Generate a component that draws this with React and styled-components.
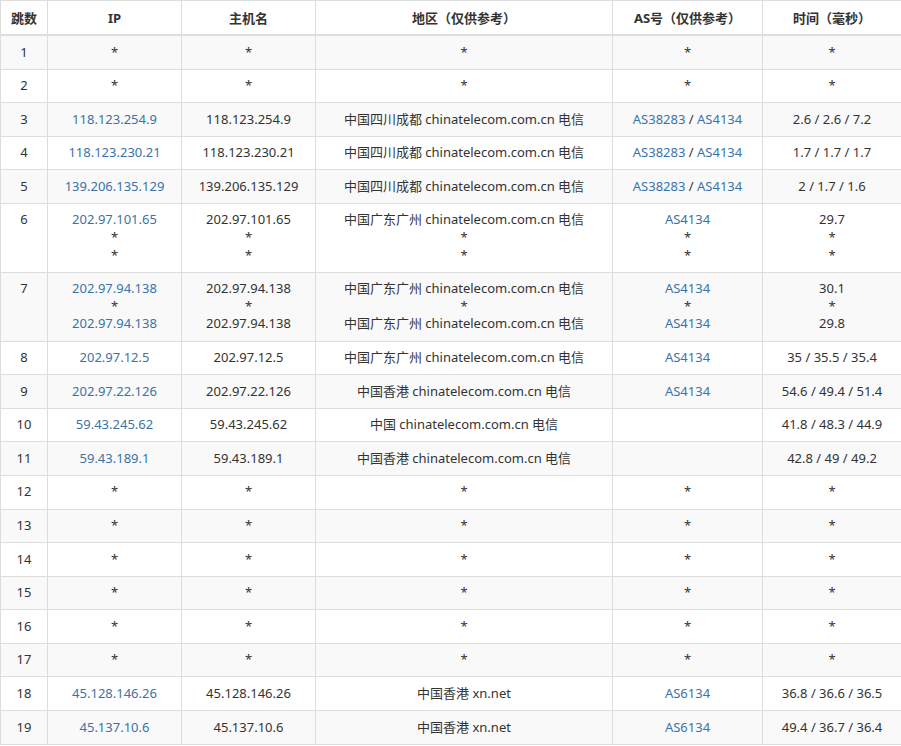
import React from "react";
import styled, { createGlobalStyle } from "styled-components";

const G = createGlobalStyle`
  body { margin: 0; background: #fff; font-family: "Noto Sans", "Noto Sans CJK SC", sans-serif; font-size: 13px; color: #333; }
`;
const Table = styled.table`
  width: 901px; border-collapse: collapse; table-layout: fixed;
`;
const Col = styled.col`
  width: ${p => p.$w}px;
`;
const Th = styled.th`
  border: 1px solid #ddd; border-bottom-width: 2px; padding: 7.5px 4px; font-weight: bold; line-height: 18px; text-align: center;
`;
const Tr = styled.tr`
  background: ${p => (p.$odd ? "#f9f9f9" : "#fff")};
`;
const Td = styled.td`
  border: 1px solid #ddd; padding: 7.5px 4px; line-height: 17.6px; text-align: center; vertical-align: top; white-space: nowrap;
`;
const Link = styled.span` color: #3b73a8; `;
const Line = styled.div``;

const S = "*";
const T = "chinatelecom.com.cn 电信";
const rows = [
  [[S],[S],[S],[S],[S]],
  [[S],[S],[S],[S],[S]],
  [["118.123.254.9"],["118.123.254.9"],["中国四川成都 "+T],["AS"],["2.6 / 2.6 / 7.2"]],
  [["118.123.230.21"],["118.123.230.21"],["中国四川成都 "+T],["AS"],["1.7 / 1.7 / 1.7"]],
  [["139.206.135.129"],["139.206.135.129"],["中国四川成都 "+T],["AS"],["2 / 1.7 / 1.6"]],
  [["202.97.101.65",S,S],["202.97.101.65",S,S],["中国广东广州 "+T,S,S],["AS4134",S,S],["29.7",S,S]],
  [["202.97.94.138",S,"202.97.94.138"],["202.97.94.138",S,"202.97.94.138"],["中国广东广州 "+T,S,"中国广东广州 "+T],["AS4134",S,"AS4134"],["30.1",S,"29.8"]],
  [["202.97.12.5"],["202.97.12.5"],["中国广东广州 "+T],["AS4134"],["35 / 35.5 / 35.4"]],
  [["202.97.22.126"],["202.97.22.126"],["中国香港 "+T],["AS4134"],["54.6 / 49.4 / 51.4"]],
  [["59.43.245.62"],["59.43.245.62"],["中国 "+T],[""],["41.8 / 48.3 / 44.9"]],
  [["59.43.189.1"],["59.43.189.1"],["中国香港 "+T],[""],["42.8 / 49 / 49.2"]],
  ...Array.from({length:6},()=>[[S],[S],[S],[S],[S]]),
  [["45.128.146.26"],["45.128.146.26"],["中国香港 xn.net"],["AS6134"],["36.8 / 36.6 / 36.5"]],
  [["45.137.10.6"],["45.137.10.6"],["中国香港 xn.net"],["AS6134"],["49.4 / 36.7 / 36.4"]],
];

const renderLine = (v, ci) => {
  if (v === S) return S;
  if (ci === 0) return <Link>{v}</Link>;
  if (ci === 3) {
    if (v === "AS") return <><Link>AS38283</Link> / <Link>AS4134</Link></>;
    return <Link>{v}</Link>;
  }
  return v;
};

export default function App() {
  return (
    <>
      <G />
      <Table>
        <colgroup>
          {[47, 134, 134, 297, 150, 139].map((w, i) => <Col key={i} $w={w} />)}
        </colgroup>
        <thead>
          <tr>
            {["跳数","IP","主机名","地区（仅供参考）","AS号（仅供参考）","时间（毫秒）"].map(h => <Th key={h}>{h}</Th>)}
          </tr>
        </thead>
        <tbody>
          {rows.map((r, i) => (
            <Tr key={i} $odd={i % 2 === 0}>
              <Td>{i + 1}</Td>
              {r.map((c, ci) => (
                <Td key={ci}>{c.map((v, li) => <Line key={li}>{renderLine(v, ci) || "\u00a0"}</Line>)}</Td>
              ))}
            </Tr>
          ))}
        </tbody>
      </Table>
    </>
  );
}
